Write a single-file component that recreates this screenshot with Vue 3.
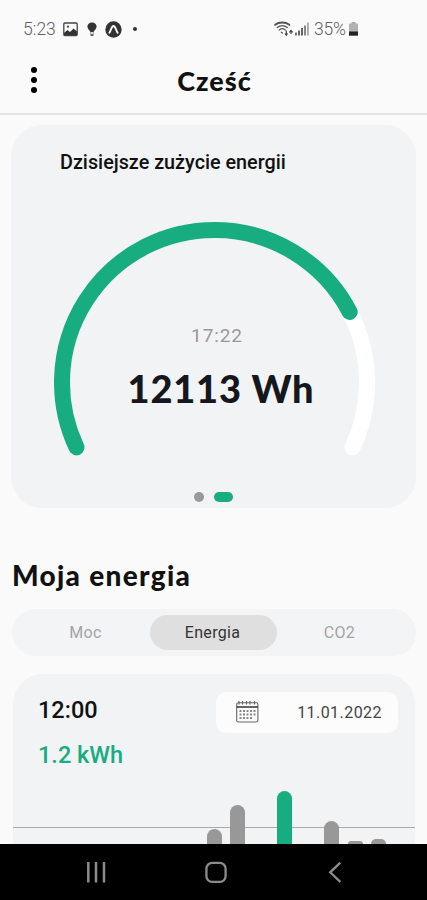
<template>
  <div class="screen">
    <!-- System status bar -->
    <div class="status-bar">
      <span class="status-time">5:23</span>
      <svg class="icon-image" width="15" height="15" viewBox="0 0 15 15">
        <rect x="0.8" y="1" width="13.4" height="12.6" rx="1" fill="#fafafa" stroke="#444" stroke-width="1.3" />
        <path d="M1 13V11L4.5 8L7 10L10.5 6.5L14 9.5V13Z" fill="#333" />
        <circle cx="5" cy="4.7" r="1.1" fill="#444" />
      </svg>
      <svg class="icon-balloon" width="10" height="15" viewBox="0 0 10 15">
        <path d="M5 0.6C2.2 0.6 0.4 2.4 0.4 4.6C0.4 6.8 2.6 8.3 3.5 10H6.5C7.4 8.3 9.6 6.8 9.6 4.6C9.6 2.4 7.8 0.6 5 0.6Z" fill="#333" />
        <path d="M3.8 10V12.6M6.2 10V12.6" stroke="#777" stroke-width="0.8" />
        <rect x="3.6" y="12.2" width="2.8" height="1.8" fill="#555" />
      </svg>
      <svg class="icon-expo" width="17" height="17" viewBox="0 0 17 17">
        <circle cx="8.5" cy="8.5" r="8.2" fill="#333" />
        <path d="M4.4 11.8C5.9 9.6 6.6 5 8.5 5S11.1 9.6 12.6 11.8" fill="none" stroke="#fafafa" stroke-width="1.9" stroke-linecap="round" />
      </svg>
      <span class="status-dot"></span>

      <svg class="icon-wifi" width="20" height="16" viewBox="0 0 20 16">
        <g fill="none" stroke="#555" stroke-linecap="round">
          <path d="M1.2 3.8C5 0.8 11.5 0.8 15.3 3.8" stroke-width="1.9" />
          <path d="M3.2 6.6C6.2 4.1 10.3 4.1 13.3 6.6" stroke-width="1.3" />
          <path d="M5.3 9C7.2 7.4 9.4 7.4 11.2 9" stroke-width="1.2" />
          <path d="M7.4 11.2L8.3 12" stroke-width="1.3" />
        </g>
        <path d="M12.3 9.5V14M11 12.5L12.3 14.2L13.6 12.5M17 13V9.5M15.4 11.4L17 9.4L18.6 11.4" fill="none" stroke="#444" stroke-width="1.2" />
      </svg>
      <svg class="icon-signal" width="14" height="14" viewBox="0 0 14 14">
        <rect x="0" y="10.5" width="2" height="3" fill="#777" />
        <rect x="3" y="8.5" width="2" height="5" fill="#666" />
        <rect x="6" y="6" width="2" height="7.5" fill="#666" />
        <rect x="9" y="3.5" width="2" height="10" fill="#888" />
        <rect x="12" y="0.5" width="1.8" height="13" fill="#aaa" />
      </svg>
      <span class="status-percent">35%</span>
      <svg class="icon-battery" width="9" height="14" viewBox="0 0 9 14">
        <rect x="2.5" y="0" width="4" height="2" fill="#aaa" />
        <rect x="0" y="1.5" width="9" height="9" fill="#b2b2b2" />
        <rect x="0" y="9.5" width="9" height="4.2" fill="#222" />
      </svg>
    </div>

    <header class="header">
      <button class="menu-button" aria-label="Menu">
        <span class="menu-dot"></span>
        <span class="menu-dot"></span>
        <span class="menu-dot"></span>
      </button>
      <h1 class="header-title">Cześć</h1>
    </header>

    <section class="usage-card">
      <h2 class="usage-title">Dzisiejsze zużycie energii</h2>
      <div class="gauge">
        <svg class="gauge-arc" width="322" height="242" viewBox="0 0 322 242">
          <path class="arc arc-track" :d="arcPath" />
          <path
            class="arc arc-value"
            :d="arcPath"
            pathLength="100"
            :stroke-dasharray="`${usedPercent} 200`"
          />
        </svg>
        <div class="gauge-text">
          <span class="gauge-time">17:22</span>
          <strong class="gauge-value">12113 Wh</strong>
        </div>
      </div>
      <div class="pager">
        <span class="pager-dot"></span>
        <span class="pager-dot active"></span>
      </div>
    </section>

    <h2 class="section-title">Moja energia</h2>

    <div class="tabs">
      <button
        v-for="tab in tabs"
        :key="tab"
        class="tab"
        :class="{ active: tab === activeTab }"
        @click="activeTab = tab"
      >
        {{ tab }}
      </button>
    </div>

    <section class="chart-card">
      <div class="chart-head">
        <div class="chart-info">
          <span class="chart-hour">12:00</span>
          <span class="chart-value">1.2 kWh</span>
        </div>
        <div class="date-picker">
          <svg width="24" height="24" viewBox="0 0 24 24">
            <rect x="1.7" y="2.7" width="21.2" height="19.3" rx="1.8" fill="none" stroke="#666" stroke-width="1.1" />
            <path d="M1.7 7H22.9" stroke="#333" stroke-width="1.5" />
            <path d="M4 1V4.5M7.5 1V4.5M11.5 1V4.5M15 1V4.5M19.5 1V4.5" stroke="#666" stroke-width="1.2" />
            <path d="M4.5 11H20.5M4.5 14.5H20.5M4.5 18H18.5" stroke="#888" stroke-width="1.8" stroke-dasharray="2 1.5" />
          </svg>
          <span class="date-text">11.01.2022</span>
        </div>
      </div>
      <div class="chart">
        <div class="grid-line"></div>
        <div class="bars">
          <span
            v-for="(bar, index) in bars"
            :key="index"
            class="bar"
            :class="{ selected: bar.selected }"
            :style="{ height: bar.height + 'px' }"
          ></span>
        </div>
      </div>
    </section>

    <!-- Android navigation -->
    <nav class="nav-bar">
      <svg width="24" height="24" viewBox="0 0 24 24">
        <path d="M4.3 2V22.5M12 2V22.5M20 2V22.5" stroke="#8c8c8c" stroke-width="2.5" />
      </svg>
      <svg width="24" height="24" viewBox="0 0 24 24">
        <rect x="2.4" y="2.9" width="19.2" height="19" rx="5.8" fill="none" stroke="#8c8c8c" stroke-width="2.3" />
      </svg>
      <svg width="24" height="24" viewBox="0 0 24 24">
        <path d="M17.3 2.7L7.2 12.3L17.3 21.9" fill="none" stroke="#8c8c8c" stroke-width="2.3" />
      </svg>
    </nav>
  </div>
</template>

<script setup>
import { ref } from 'vue';

const tabs = ['Moc', 'Energia', 'CO2'];
const activeTab = ref('Energia');

const arcPath = 'M23.5 226.4A152.5 152.5 0 1 1 299.5 226.4';
const usedPercent = ref(77.1);

const bars = [
  { height: 15 },
  { height: 39 },
  { height: 0 },
  { height: 53, selected: true },
  { height: 0 },
  { height: 23 },
  { height: 3 },
  { height: 5 }
];
</script>

<style>
body {
  margin: 0;
  background-color: #fafafa;
}
</style>

<style scoped>
.screen {
  display: flex;
  flex-direction: column;
  width: 427px;
  height: 900px;
  overflow: hidden;
  background-color: #fafafa;
  font-family: Roboto, "Liberation Sans", sans-serif;
  color: #111;
}

button {
  padding: 0;
  border: none;
  background: none;
  font: inherit;
}

h1,
h2 {
  margin: 0;
}

.status-bar {
  display: flex;
  align-items: center;
  flex: none;
  height: 48px;
  padding: 10px 69px 0 23px;
  box-sizing: border-box;
  color: #606060;
}

.status-time {
  width: 33px;
  margin-right: 7px;
  font-size: 17.5px;
  font-weight: 300;
}

.icon-balloon {
  margin-left: 9px;
}

.icon-expo {
  margin-left: 8px;
}

.status-dot {
  width: 4px;
  height: 4px;
  margin-left: 11px;
  border-radius: 50%;
  background-color: #333;
}

.icon-wifi {
  margin-left: auto;
}

.icon-signal {
  margin-left: 1px;
}

.status-percent {
  width: 34px;
  margin: 0 1px 0 5px;
  font-size: 17.5px;
  font-weight: 300;
  letter-spacing: -0.2px;
}

.header {
  display: flex;
  align-items: center;
  flex: none;
  height: 67px;
  box-sizing: border-box;
  border-bottom: 2px solid #e3e5e5;
}

.menu-button {
  display: flex;
  flex-direction: column;
  align-items: center;
  gap: 4px;
  width: 67px;
  padding-bottom: 2px;
}

.menu-dot {
  width: 6px;
  height: 6px;
  border-radius: 50%;
  background-color: #000;
}

.header-title {
  flex: 1;
  padding-right: 65px;
  text-align: center;
  font-family: Lato, sans-serif;
  font-size: 27px;
  line-height: 32px;
  font-weight: 900;
  letter-spacing: 1px;
}

.usage-card {
  display: flex;
  flex-direction: column;
  flex: none;
  height: 383px;
  margin: 10px 11px 0;
  border-radius: 31px;
  background-color: #f1f3f5;
}

.usage-title {
  margin: 27px 0 0 49px;
  font-size: 19.8px;
  line-height: 22px;
  font-weight: 500;
}

.gauge {
  position: relative;
  width: 322px;
  height: 242px;
  margin: 47px 0 0 42px;
}

.gauge-arc {
  display: block;
  overflow: visible;
}

.arc {
  fill: none;
  stroke-width: 16;
  stroke-linecap: round;
}

.arc-track {
  stroke: #fff;
}

.arc-value {
  stroke: #18ad81;
}

/* Reading shown over the middle of the arc */
.gauge-text {
  position: absolute;
  top: 102px;
  left: 0;
  right: 0;
  display: flex;
  flex-direction: column;
  align-items: center;
  gap: 23px;
}

.gauge-time {
  padding-left: 6px;
  font-size: 19px;
  line-height: 26px;
  letter-spacing: 0.9px;
  color: #999;
}

.gauge-value {
  padding-left: 14px;
  font-family: Lato, sans-serif;
  font-size: 38px;
  line-height: 32px;
  font-weight: 900;
  letter-spacing: 0.8px;
  white-space: nowrap;
  color: #15171c;
}

.pager {
  display: flex;
  align-items: center;
  gap: 10px;
  margin: 29px 0 0 183px;
}

.pager-dot {
  width: 10px;
  height: 10px;
  border-radius: 5px;
  background-color: #999;
}

.pager-dot.active {
  width: 19px;
  background-color: #18ad81;
}

.section-title {
  flex: none;
  margin: 50px 0 0 12px;
  font-family: Lato, sans-serif;
  font-size: 28px;
  line-height: 34px;
  font-weight: 900;
  letter-spacing: 1.3px;
}

.tabs {
  display: flex;
  align-items: center;
  flex: none;
  height: 47px;
  margin: 17px 11px 0 12px;
  padding: 0 12px 0 11px;
  box-sizing: border-box;
  border-radius: 24px;
  background-color: #f2f4f5;
}

.tab {
  flex: 1;
  height: 35px;
  margin-bottom: 1px;
  padding-right: 2px;
  border-radius: 18px;
  font-size: 16px;
  letter-spacing: 0.3px;
  color: #a4a4a4;
}

.tab.active {
  background-color: #dfdfdf;
  color: #333;
}

.chart-card {
  display: flex;
  flex-direction: column;
  flex: 1;
  margin: 18px 12px 0 13px;
  border-radius: 30px 30px 0 0;
  background-color: #f1f3f5;
}

.chart-head {
  display: flex;
  justify-content: space-between;
  padding: 18px 17px 0 25px;
}

.chart-info {
  display: flex;
  flex-direction: column;
  gap: 17px;
  padding-top: 4px;
  font-size: 23.5px;
  line-height: 28px;
  font-weight: 500;
}

.chart-value {
  color: #18ad81;
}

.date-picker {
  display: flex;
  align-items: center;
  justify-content: space-between;
  width: 182px;
  height: 41px;
  padding: 0 16px 1px 19px;
  box-sizing: border-box;
  border-radius: 10px;
  background-color: #fcfcfc;
}

.date-text {
  font-size: 16px;
  letter-spacing: 0.45px;
  color: #444;
}

.chart {
  position: relative;
  flex: 1;
}

.grid-line {
  position: absolute;
  left: 0;
  right: 0;
  bottom: 16px;
  height: 1px;
  background-color: #aaa;
}

.bars {
  position: absolute;
  right: 29px;
  bottom: 0;
  display: flex;
  align-items: flex-end;
  gap: 8.5px;
  height: 53px;
  overflow: hidden;
}

.bar {
  width: 15px;
  border-radius: 8px 8px 0 0;
  background-color: #979897;
}

.bar.selected {
  background-color: #18ad81;
}

.nav-bar {
  display: flex;
  align-items: center;
  justify-content: space-between;
  flex: none;
  height: 56px;
  padding: 0 80px 0 84px;
  background-color: #000;
}
</style>
